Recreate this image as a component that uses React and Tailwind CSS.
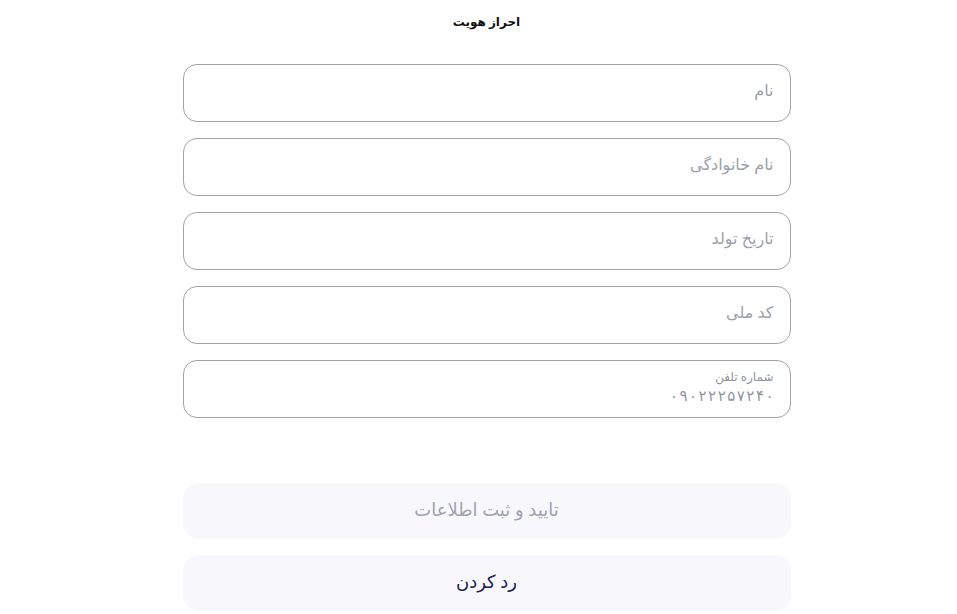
import React, { useState } from "react";

const fields = [
    { id: "firstName", label: "نام" },
    { id: "lastName", label: "نام خانوادگی" },
    { id: "birthDate", label: "تاریخ تولد" },
    { id: "nationalCode", label: "کد ملی" },
];

function TextField({ id, label }) {
    return (
        <input
            id={id}
            placeholder={label}
            className="h-[58px] w-full rounded-[14px] border border-[#a3a3a3] bg-white px-4 pb-[6px] text-[16px] text-[#374151] outline-none placeholder:text-[#9b9fa8]"
        />
    );
}

export default function App() {
    const [phone] = useState("۰۹۰۲۲۲۵۷۲۴۰");

    return (
        <div
            dir="rtl"
            className="min-h-screen bg-white"
            style={{ fontFamily: '"Noto Sans", "DejaVu Sans", sans-serif' }}
        >
            <div className="mx-auto flex w-[608px] translate-x-[8px] flex-col">
                <h1 className="pt-[12px] text-center text-[12px] font-bold leading-5 text-[#111]">احراز هویت</h1>

                <div className="mt-[32px] flex flex-col gap-4">
                    {fields.map((f) => (
                        <TextField key={f.id} {...f} />
                    ))}

                    {/* شماره تلفن */}
                    <div className="flex h-[58px] flex-col justify-center rounded-[14px] border border-[#a3a3a3] px-4 pb-[4px]">
                        <label className="text-[12px] leading-4 text-[#8f93a0]">شماره تلفن</label>
                        <div dir="ltr" className="flex gap-[1.5px] self-start text-[15px] leading-5 text-[#8f93a0]">
                            {phone.split("").map((d, i) => (
                                <span key={i}>{d}</span>
                            ))}
                        </div>
                    </div>
                </div>

                <div className="mt-[65px] flex flex-col gap-4">
                    <button className="h-[56px] w-full rounded-[16px] bg-[#f8f8fc] pb-1 text-[18px] text-[#a0a2b3]">
                        تایید و ثبت اطلاعات
                    </button>
                    <button className="h-[56px] w-full rounded-[16px] bg-[#f8f8fc] pb-1 text-[18px] text-[#1f2150]">
                        رد کردن
                    </button>
                </div>
            </div>
        </div>
    );
}
